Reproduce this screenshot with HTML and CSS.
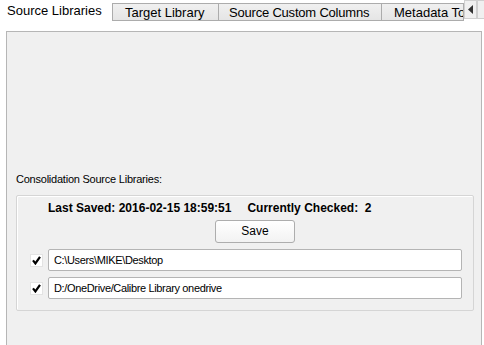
FILE: index.html
```html
<!DOCTYPE html>
<html>
<head>
<meta charset="utf-8">
<link rel="stylesheet" href="styles.css">
</head>
<body>
<div class="tabbar">
  <div class="tab tab-active">Source Libraries</div>
  <div class="tab">Target Library</div>
  <div class="tab">Source Custom Columns</div>
  <div class="tab tab-clip">Metadata To</div>
  <div class="scroller">
    <div class="arrow-btn"><svg width="6" height="9" viewBox="0 0 6 9"><path d="M5 0 L0 4.5 L5 9 Z" fill="#333"/></svg></div>
    <div class="arrow-btn arrow-right"></div>
  </div>
</div>
<div class="pane">
  <div class="group-title">Consolidation Source Libraries:</div>
  <div class="group">
    <div class="info-row">
      <span class="info-a">Last Saved: 2016-02-15 18:59:51</span>
      <span class="info-b">Currently Checked:&nbsp;&nbsp;2</span>
    </div>
    <div class="btn-row"><div class="btn">Save</div></div>
    <div class="lib-row">
      <div class="check"><svg width="9" height="9" viewBox="0 0 9 9"><path d="M1 4.3 L3.4 7.4 L8 0.8" fill="none" stroke="#000" stroke-width="2.2"/></svg></div>
      <div class="edit">C:\Users\MIKE\Desktop</div>
    </div>
    <div class="lib-row">
      <div class="check"><svg width="9" height="9" viewBox="0 0 9 9"><path d="M1 4.3 L3.4 7.4 L8 0.8" fill="none" stroke="#000" stroke-width="2.2"/></svg></div>
      <div class="edit">D:/OneDrive/Calibre Library onedrive</div>
    </div>
  </div>
</div>
</body>
</html>
```

FILE: styles.css
```css
* { box-sizing: border-box; }
html, body {
  margin: 0;
  padding: 0;
  background: #ffffff;
  width: 484px;
  height: 345px;
  overflow: hidden;
  font-family: "Liberation Sans", Arial, sans-serif;
  color: #000;
}
.tabbar {
  display: flex;
  height: 21px;
  align-items: flex-end;
  white-space: nowrap;
  overflow: hidden;
}
.tab {
  height: 18px;
  padding: 0 12px;
  font-size: 13px;
  line-height: 17px;
  border: 1px solid #acacac;
  border-left: none;
  background: linear-gradient(#f0f0f0, #e5e5e5);
  color: #000;
  flex: none;
}
.tab-active {
  height: 21px;
  width: 112px;
  padding: 0 0 0 7px;
  border: none;
  background: #ffffff;
  line-height: 22px;
}
.tab:nth-child(2) { border-left: 1px solid #acacac; width: 107px; }
.tab:nth-child(3) { width: 163px; padding: 0 10px; letter-spacing: -0.2px; }
.tab-clip { width: 82px; overflow: hidden; padding-right: 0; }
.scroller {
  display: flex;
  height: 21px;
  align-self: flex-start;
  flex: none;
}
.arrow-btn {
  width: 13px;
  height: 19px;
  background: #f0f0f0;
  border: 1px solid #d0d0d0;
  display: flex;
  align-items: center;
  justify-content: center;
}
.arrow-right { width: 9px; border-right: none; }
.pane {
  margin: 10px 0 0 6px;
  width: 476px;
  height: 320px;
  border: 1px solid #b6b6b6;
  border-bottom: none;
  background: #f0f0f0;
  padding: 140px 7px 0 9px;
}
.group-title {
  font-size: 11px;
  letter-spacing: -0.23px;
  line-height: 15px;
  height: 23px;
  color: #000;
}
.group {
  height: 116px;
  border: 1px solid #d5d5d5;
  border-radius: 2px;
  box-shadow: inset 1px 1px 0 #ffffff;
  padding: 5px 10px 0 13px;
}
.info-row {
  display: flex;
  font-size: 12px;
  font-weight: bold;
  line-height: 15px;
  padding-left: 18px;
  height: 19px;
}
.info-b { margin-left: 16px; }
.btn-row {
  display: flex;
  padding-left: 185px;
  height: 29px;
}
.btn {
  width: 80px;
  height: 23px;
  border: 1px solid #adadad;
  border-radius: 3px;
  background: linear-gradient(#ffffff, #f2f2f2);
  font-size: 12px;
  line-height: 21px;
  text-align: center;
}
.lib-row {
  display: flex;
  align-items: flex-start;
  height: 28px;
}
.check {
  width: 13px;
  height: 13px;
  margin-top: 5px;
  background: #fff;
  border: 1px solid #e3e3e3;
  display: flex;
  align-items: center;
  justify-content: center;
  margin-right: 5px;
}
.edit {
  width: 414px;
  height: 22px;
  background: #fff;
  border: 1px solid #b4b4b4;
  border-radius: 2px;
  font-size: 11px;
  letter-spacing: -0.35px;
  line-height: 20px;
  padding-left: 5px;
}
```
